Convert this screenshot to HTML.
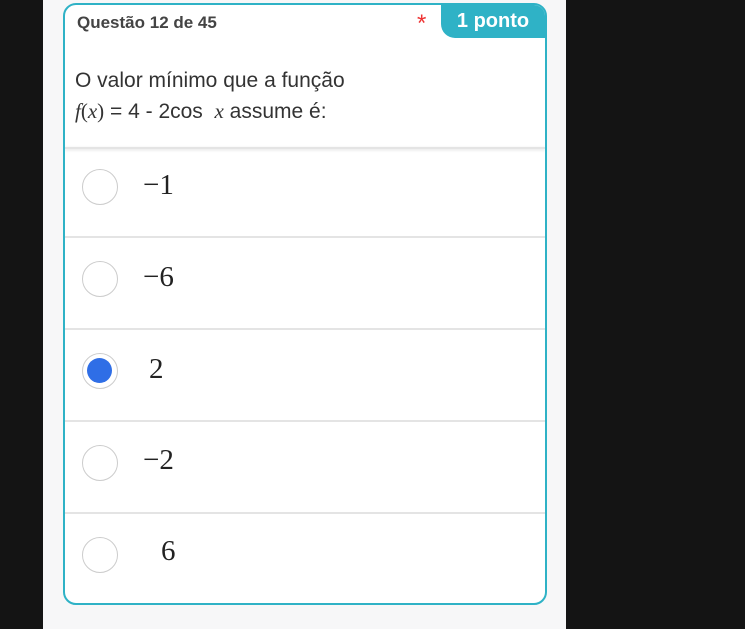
<!DOCTYPE html>
<html><head><meta charset="utf-8"><style>
*{margin:0;padding:0;box-sizing:border-box}
body{width:745px;height:629px;background:#141414;position:relative;overflow:hidden;font-family:"Liberation Sans",sans-serif}
.panel{position:absolute;left:43px;top:0;width:523px;height:629px;background:#f7f7f8}
.card{position:absolute;left:63px;top:3px;width:484px;height:602px;background:#fff;border:2px solid #2fb2c6;border-radius:13px;overflow:hidden}
.hdr{position:absolute;left:12px;top:8px;font-size:17px;color:#444;font-weight:bold}
.star{position:absolute;left:352px;top:5px;color:#e33;font-size:24px}
.badge{position:absolute;right:0;top:0;width:104px;height:33px;background:#2fb2c6;border-bottom-left-radius:14px;color:#fff;font-weight:bold;font-size:20px;text-align:center;line-height:33px}
.q{position:absolute;left:10px;top:61px;font-size:21px;color:#333;line-height:30px}
.sep{position:absolute;left:0;width:100%;height:2px;background:#e4e4e4}
.rad{position:absolute;left:17px;width:36px;height:36px;border-radius:50%;border:1.5px solid #ccc;background:#fff}
.rad.on::after{content:"";position:absolute;left:4px;top:4px;width:25px;height:25px;border-radius:50%;background:#2f6ee6}
.t{position:absolute;font-family:"Liberation Serif",serif;font-size:29px;color:#222}
</style></head><body>
<div class="panel"></div>
<div class="card">
<div class="hdr">Questão 12 de 45</div>
<div class="star">*</div>
<div class="badge">1 ponto</div>
<div class="q">O valor mínimo que a função<br><span style="font-family:'Liberation Serif',serif;font-style:italic">f</span><span style="font-family:'Liberation Serif',serif">(<i>x</i>)</span> = 4 - 2cos &nbsp;<i style="font-family:'Liberation Serif',serif">x</i> assume é:</div>
<div class="sep" style="top:142px;box-shadow:0 1px 3px #ddd"></div>
<div class="rad" style="top:164px"></div><div class="t" style="left:78px;top:164px">−1</div>
<div class="sep" style="top:231px"></div>
<div class="rad" style="top:256px"></div><div class="t" style="left:78px;top:256px">−6</div>
<div class="sep" style="top:323px"></div>
<div class="rad on" style="top:348px"></div><div class="t" style="left:84px;top:348px">2</div>
<div class="sep" style="top:415px"></div>
<div class="rad" style="top:440px"></div><div class="t" style="left:78px;top:439px">−2</div>
<div class="sep" style="top:507px"></div>
<div class="rad" style="top:532px"></div><div class="t" style="left:96px;top:530px">6</div>
</div>
</body></html>
